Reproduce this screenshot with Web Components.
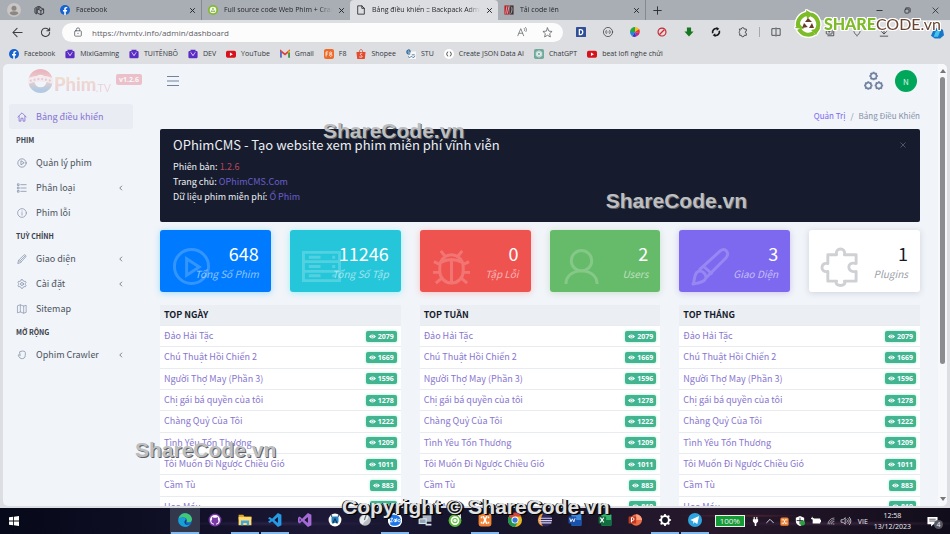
<!DOCTYPE html>
<html lang="vi">
<head>
<meta charset="utf-8">
<title>Bảng điều khiển :: Backpack Admin</title>
<style>
html,body{margin:0;height:100%}
body{overflow:hidden;font-family:"Open Sans","Noto Sans",sans-serif;font-size:8px;background:#dcdee2;
--page:"Noto Sans CJK SC","Noto Sans",sans-serif}
</style>
</head>
<body>
<desktop-screen></desktop-screen>
<script>
const S = (vb, body, extra = '') => `<svg viewBox="0 0 ${vb} ${vb}" ${extra}>${body}</svg>`;
const L = (body, w = 1.5, vb = 24) => S(vb, body, `fill="none" stroke="currentColor" stroke-width="${w}" stroke-linejoin="round" stroke-linecap="round"`);
const cogPath = n => { let d = ''; for (let i = 0; i < n * 4; i++) { const r = (i % 4 < 2) ? 10.5 : 8, a = (i - .5) * Math.PI / (n * 2) - Math.PI / 2 ; d += (i ? 'L' : 'M') + (12 + r * Math.cos(a)).toFixed(1) + ' ' + (12 + r * Math.sin(a)).toFixed(1); } return d + 'z'; };
const tv = S(24, '<path fill="#5b2cc4" d="M6 2h12v3h2a3 3 0 0 1 3 3v11a3 3 0 0 1-3 3H4a3 3 0 0 1-3-3V8a3 3 0 0 1 3-3h2z"/><path d="M8 10l4 6 4-6M6 8h2m8 0h2" stroke="#e8dcff" stroke-width="2.2" fill="none"/>');
const yt = S(24, '<rect y="4" width="24" height="17" rx="4" fill="#d6131c"/><path d="M9.5 8.5v8l7-4z" fill="#fff"/>');
const xampp = S(24, '<rect x="1" y="1" width="22" height="22" rx="4" fill="#f08132"/><path d="M8 6c3 0 2 4 4 6-2 2-1 6-4 6M16 6c-3 0-2 4-4 6 2 2 1 6 4 6M6 6v3m0 6v3M18 6v3m0 6v3" stroke="#fff" stroke-width="2.6" fill="none"/>');
const office = (c, c2, l) => S(24, `<rect x="6" y="2" width="17" height="20" rx="2" fill="${c}"/><path d="M6 12h17v8a2 2 0 0 1-2 2H6z" fill="${c2}"/><rect x="1" y="6" width="13" height="12" rx="1" fill="${c2}"/>${l}`);
const ICONS = {
 user: S(24, '<circle cx="12" cy="12" r="12" fill="#c9c6c3"/><circle cx="12" cy="9" r="4.3" fill="#8b8784"/><path d="M4.500 18c0-5 15-5 15 0-4 4-11 4-15 0" fill="#8b8784"/>'),
 spaces: L('<path d="M8 9l6-3 7 3v9l-6 3-7-3zM8 9l7 3v9M15 12l6-3M5 19l-3-2V7l7-4 6 2M5 19V8l7-4"/>', 1.7),
 fb: S(24, '<circle cx="12" cy="12" r="12" fill="#1763cf"/><path fill="#fff" d="M10.200 24v-8.700H7.200v-3.500h3V9.200c0-3 1.800-4.700 4.500-4.700l2.700.2v3h-1.500c-1.500 0-2 .9-2 1.900v2.200h3.300l-.5 3.500h-2.800V24z"/>'),
 leaf: S(24, '<circle cx="12" cy="12" r="12" fill="#82b92f"/><circle cx="12" cy="12" r="8" fill="#f4f8ea"/><path d="M12 6l2.500 5h-5zM6.500 16l3-4 2.500 4zm11 0l-3-4-2.500 4z" fill="#6d9d2a"/>'),
 file: L('<path d="M5 2h9l6 6v14H5zM14 2v6h6"/>', 2),
 code: S(24, '<path d="M1 1h11v22H1z" fill="#b71f28"/><path d="M13 1h10v22H13z" fill="#3d3235"/><path d="M7 3L4 21M12 3L8 21m9-17c4 1 2 14-1 17" stroke="#e6dcdc" stroke-width="1.600" fill="none"/>'),
 close: L('<path d="M5 5l14 14M19 5L5 19"/>', 3.4),
 xthin: L('<path d="M3 3l18 18M21 3L3 21"/>', 2.6),
 plus: L('<path d="M12 2v20M2 12h20"/>', 2.4),
 min: L('<path d="M3 12h18"/>', 3),
 max: L('<rect x="3" y="7" width="14" height="14" rx="3"/><path d="M7 3h11a3 3 0 0 1 3 3v11"/>', 2.6),
 back: L('<path d="M22 12H2M11 3l-9 9 9 9"/>', 2.3),
 reload: L('<path d="M21 12a9 9 0 1 1-3-7l3 3M21 2v6h-6"/>', 2.3),
 lock: L('<rect x="4" y="9" width="16" height="13" rx="2"/><path d="M8 9V6a4 4 0 0 1 8 0v3M12 15v1"/>', 2),
 read: L('<path d="M2 21L9 4l7 17M4.500 15h9M17 3c2 1.500 2 4 1 6M20.500 1c3 3 3 7 1 10"/>', 1.8),
 star: L('<path d="M12 2l3 7 7 .7-5.300 4.800 1.600 7.200L12 18l-6.300 3.700 1.600-7.200L2 9.700 9 9z"/>', 1.8),
 dsq: S(24, '<rect width="24" height="24" rx="2" fill="#2f4f98"/><path d="M8 6v12h3c7 0 7-12 0-12z" stroke="#fff" stroke-width="3" fill="none"/>'),
 dots: L('<circle cx="12" cy="12" r="11"/><path d="M8 8c-2 1-2 7 0 8m8-8c2 1 2 7 0 8M10 12h.1M14 12h.1"/>', 1.8),
 pin: S(24, '<path d="M12 12L12 0A12 12 0 0 1 22 5z" fill="#f4c21b"/><path d="M12 12L22 5a12 12 0 0 1 1 10z" fill="#e63b2e"/><path d="M12 12l11 3a12 12 0 0 1-8 8z" fill="#c12892"/><path d="M12 12l3 11a12 12 0 0 1-10-1z" fill="#4436b8"/><path d="M12 12L5 22A12 12 0 0 1 0 12z" fill="#2787d8"/><path d="M12 12H0A12 12 0 0 1 12 0z" fill="#25a648"/>'),
 ban: S(24, '<circle cx="12" cy="12" r="9.500"/><path d="M6 18L18 6"/>', 'fill="none" stroke="#cf2530" stroke-width="2.800"'),
 down: S(24, '<path d="M7 1h10v10h6L12 23 1 11h6z" fill="#167821"/>'),
 sync: S(24, '<path d="M4 15A9 9 0 0 1 15 4M20 9A9 9 0 0 1 9 20" fill="none" stroke="#17191b" stroke-width="4"/><path d="M13 0l7 4-6 5zM11 24l-7-4 6-5z" fill="#17191b"/>'),
 ext: L('<path d="M4 5h4a3.500 3.500 0 0 1 7 0h5v5a2.500 2.500 0 0 0 0 5v5h-5a3.500 3.500 0 0 1-7 0H4v-5a3 3 0 0 1 0-5z"/>', 2.1),
 split: L('<path d="M10 4H2v16h8M14 4h8v16h-8M12 2v20"/>', 2),
 favs: L('<path d="M3 7h18M3 12h12M3 17h9"/>', 1.8), coll: L('<rect x="3" y="3" width="14" height="14" rx="2"/><path d="M7 21h14V8M10 7v6M7 10h6"/>', 2),
 heart: L('<path d="M12 21C0 11 4 3 12 7c8-4 12 4 0 14"/>', 1.8),
 dl: L('<path d="M12 2v14M6 11l6 6 6-6M3 22h18"/>', 2),
 copilot: S(24, '<path d="M6 4h9l7 3 2 10-7 6H7l-7-5z" fill="#1677c9"/><path d="M9 9h8l-4 11H5z" fill="#43c3ee"/>'),
 tv, yt, xampp,
 gmail: S(24, '<path d="M2 20V5l10 8 10-8v15" fill="none" stroke="#e43e32" stroke-width="4"/><path d="M0 6h4v15H1z" fill="#3b7ded"/><path d="M20 6h4v15h-4z" fill="#2f9f4f"/><path d="M20 10V4h4v4z" fill="#f2b91b"/>'),
 f8: S(24, '<rect width="24" height="24" rx="5" fill="#ed6a28"/><path d="M5 18V7h5M5 12h4M16 7a2.500 2.500 0 1 0 .1 0M16 12a2.800 2.800 0 1 0 .1 0" fill="none" stroke="#fff" stroke-width="2"/>'),
 shopee: S(24, '<path d="M1 7h22l-2 17H3z" fill="#e44a2d"/><path d="M8 8c0-9 8-9 8 0" fill="none" stroke="#e44a2d" stroke-width="2"/><path d="M15 11c-3-2-7 1-3 4s4 6-4 4" fill="none" stroke="#fff" stroke-width="2"/>'),
 stu: S(24, '<path d="M7 6h17v18H7z" fill="#f5f7f9"/><path d="M2 7h8c0-8-9-5-8 1s7 4 8 3" fill="none" stroke="#245f98" stroke-width="2.500"/><path d="M5 18l4 3 4-4 4 4 5-4M14 14h7" fill="none" stroke="#3d6b92" stroke-width="2"/>'),
 json: S(24, '<circle cx="12" cy="12" r="12" fill="#fff"/><path d="M10 7C6 7 9 11 6 12c3 1 0 5 4 5m4-10c4 0 1 4 4 5-3 1 0 5-4 5" fill="none" stroke="#222" stroke-width="2"/>'),
 gpt: S(24, '<rect width="24" height="24" rx="4" fill="#71a99b"/><g fill="none" stroke="#fff" stroke-width="1.500"><ellipse cx="12" cy="12" rx="3.500" ry="8"/><ellipse cx="12" cy="12" rx="3.500" ry="8" transform="rotate(60 12 12)"/><ellipse cx="12" cy="12" rx="3.500" ry="8" transform="rotate(120 12 12)"/></g>'),
 home: L('<path d="M2 12L12 2l10 10M5 10v12h4.500v-7h5v7H19V10"/>', 2),
 play: L('<circle cx="12" cy="12" r="10"/><path d="M9.500 7.500v9l7-4.500z"/>', 2),
 list: L('<path d="M9 4h13M9 12h13M9 20h13M2 2h3v4H2zM2 10h3v4H2zM2 18h3v4H2z"/>', 1.9),
 info: L('<circle cx="12" cy="12" r="10.500"/><path d="M12 11v6M12 7v.5"/>', 1.8),
 pencil: L('<path d="M2 22l2-7L17 2c2-1 6 2 4 5L9 20zM4 15l5 5M8 16L19 5"/>', 1.8),
 cog: L(`<path d="${cogPath(6)}"/><circle cx="12" cy="12" r="3.500"/>`, 1.9),
 map: L('<path d="M2 4l6-2 8 3 6-2v17l-6 2-8-3-6 2zM8 2v17M16 5v17"/>', 1.7),
 hand: L('<path d="M7 4c3-2 10-2 12 0s1 9 0 13-9 5-12 2-5-7-3-8c2 1 3 2 3 2z"/>', 1.9),
 left: L('<path d="M15 4l-8 8 8 8"/>', 3.6),
 cogs: S(36, [[10.5, 0], [0.5, 18], [20.5, 18]].map(p => `<g transform="translate(${p[0]} ${p[1]}) scale(.64)"><path d="${cogPath(8)}"/></g>`).join(''), 'fill="none" stroke="currentColor" stroke-width="4.400"'),
 menu: S(24, '<path d="M0 3h24M0 12h24M0 21h24" stroke="currentColor" stroke-width="2.200"/>'),
 eye: S(24, '<path d="M0 12Q12-1 24 12 12 25 0 12" fill="currentColor"/><circle cx="12" cy="12" r="4" fill="none" stroke="#42b48f" stroke-width="2"/>'),
 bplay: L('<circle cx="20" cy="20" r="17.500"/><path d="M15 12v17l13-8.500z" stroke-linejoin="miter"/>', 3, 40),
 bserver: S(40, '<path d="M1.500 5.500h37v29h-37zM1.500 15h37M1.500 25h37"/><path d="M7 10.500h12M7 20h12M7 29.500h12M31 10.500h3M31 20h3M31 29.500h3"/>', 'fill="none" stroke="currentColor" stroke-width="3"'),
 bbug: S(40, '<path d="M8 20a12 12 0 0 1 24 0v5a12 12 0 0 1-24 0zM9 16c7-4 15-4 22 0M20 14v22M13 9l-4-5M27 9l4-5M8 18l-6-3M32 18l6-3M8 26H1M32 26h7M10 32l-6 5M30 32l6 5"/>', 'fill="none" stroke="currentColor" stroke-width="3"'),
 buser: S(40, '<circle cx="20" cy="14" r="10.500"/><path d="M4 38c0-18 32-18 32 0"/>', 'fill="none" stroke="currentColor" stroke-width="3"'),
 bbrush: L('<path d="M2 38c2-3 1-9 4-12 5-4 12 3 8 8-3 3-9 3-12 4M9 23L30 4c5-4 10 2 6 7L16 31M13 20l8 7"/>', 3, 40),
 bpuzzle: L('<path d="M7 8h9c-2-8 10-8 8 0h12v9c-10-3-10 10 0 8v10H24c3 6-11 6-8 0H7V25c-8 2-8-10 0-8z"/>', 3, 40),
 win: S(24, '<path d="M0 3l10-1v9H0zM12 2l12-2v11H12zM0 13h10v9L0 21zM12 13h12v11l-12-2z" fill="#fff"/>'),
 edge: S(24, '<circle cx="12" cy="12" r="12" fill="#1767c4"/><path d="M1 10C4-4 23-2 24 11c-1 7-11 6-9 1 1-5-8-6-14-2" fill="#42c977"/><path d="M1 10c6-5 13-2 12 2-5 5 1 11 9 7C12 30-2 20 1 10" fill="#189fd5"/><path d="M13 12c-5 5 1 11 9 7-9 3-10-3-7-7z" fill="#0d3f83"/>'),
 git: S(24, '<circle cx="12" cy="12" r="11" fill="#7839a6"/><circle cx="12" cy="12" r="8.500" fill="#fff"/><path d="M7 7l3 1h4l3-1v4c3 5-2 7-3 7v3h-4v-3c-3 0-6-4-3-7z" fill="#7839a6"/>'),
 folder: S(24, '<path d="M1 3h8l2 3h12v5H1z" fill="#dca62d"/><path d="M1 7h22v14H1z" fill="#ffdc72"/><path d="M5 21v-8h14v8h-4v-4H9v4z" fill="#41a7df"/>'),
 vsc: S(24, '<path d="M17 0l6 3v18l-6 3L7 14l-4 3-3-2 4-3-4-3 3-2 4 3zM17 7l-6 5 6 5z" fill="#269ae5" fill-rule="evenodd"/>'),
 vs: S(24, '<path d="M17 0l6 3v18l-6 3L7 14l-4 4-3-2V8l3-2 4 4zM17 7l-6 5 6 5zM3 9v6l2-3z" fill="#a56ad5" fill-rule="evenodd"/>'),
 studio: S(24, '<circle cx="12" cy="12" r="11" fill="#fff"/><rect x="6" y="6" width="12" height="11" rx="2" fill="#2483c7"/><path d="M8 18l4-8 4 8M7 6l-2-2m12 2l2-2" fill="none" stroke="#13374d" stroke-width="2"/>'),
 mouse: S(24, '<circle cx="12" cy="12" r="10" fill="#b9bec2"/><path d="M4 17C0 3 18 0 18 7c-1 7-10 8-9 13" fill="#e9ecee"/><path d="M14 3l-3 9" stroke="#697078" stroke-width="2"/>'),
 zalo: S(24, '<rect width="24" height="24" rx="10" fill="#fff"/><rect x="1" y="1" width="22" height="22" rx="9" fill="#fff"/><path d="M3 5c5-4 18-3 19 7s-12 12-18 8z" fill="#1975e8"/><path d="M4 9h4l-4 6h4m5-4c-4-2-4 5 0 4v-4 4m2-6v6m4-4a2 2 0 1 0 .1 0" stroke="#fff" stroke-width="1.600" fill="none"/>'),
 pc: S(24, '<path d="M8 4h15v11H8z" fill="#aab5c1"/><path d="M1 9h14v10H1z" fill="#dbe2e9"/><path d="M3 11h10v6H3z" fill="#90a4b6"/><path d="M13 20h10" stroke="#dbe2e9" stroke-width="3"/>'),
 coc: S(24, '<circle cx="12" cy="13" r="11" fill="#59b938"/><circle cx="12" cy="13" r="6" fill="none" stroke="#fff" stroke-width="3"/><circle cx="12" cy="13" r="3" fill="#e9f4e3"/><path d="M16 1l6 8M21 0v7" stroke="#fff" stroke-width="2"/>'),
 chrome: S(24, '<circle cx="12" cy="12" r="12" fill="#e7b921"/><path d="M12 12L1.500 6A12 12 0 0 1 23 6H12z" fill="#db4437"/><path d="M12 12L1.500 6A12 12 0 0 0 12 24l6-10z" fill="#219653"/><circle cx="12" cy="12" r="6" fill="#fff"/><circle cx="12" cy="12" r="4.500" fill="#3878dc"/>'),
 eclipse: S(24, '<circle cx="13" cy="12" r="11" fill="#2d275d"/><path d="M1 7a11 11 0 0 0 8 16C4 18 4 7 9 1 5 1 2 4 1 7" fill="#f49a35"/><path d="M2 9h22M2 13h22M3 17h20" stroke="#d5d0ec" stroke-width="2"/>'),
 word: office('#3c8adb', '#1951ad', '<path d="M3 9l2 6 2.500-5L10 15l2-6" fill="none" stroke="#fff" stroke-width="1.500"/>'),
 excel: office('#31b56e', '#126d3f', '<path d="M4 8l6 8M10 8l-6 8" stroke="#fff" stroke-width="1.800"/>'),
 ppt: S(24, '<circle cx="14" cy="12" r="10" fill="#f06c43"/><path d="M14 2a10 10 0 0 1 10 10H14z" fill="#ffa080"/><rect x="1" y="6" width="13" height="12" rx="1" fill="#bd3a20"/><path d="M6 16V8h2c3 0 3 5 0 5H6" fill="none" stroke="#fff" stroke-width="1.700"/>'),
 gear: S(24, `<path d="${cogPath(8)}" fill="#fff"/><circle cx="12" cy="12" r="5" fill="#171426"/>`),
 tele: S(24, '<circle cx="12" cy="12" r="12" fill="#2da4df"/><path d="M4 12l15-7-3 14-5-3-2 3v-5z" fill="#fff"/>'),
 plug: S(24, '<path d="M7 0h3v6h4V0h3v6h2v6l-5 5v7h-4v-7l-5-5V6h2z" fill="#fff"/>'),
 up: L('<path d="M2 17L12 7l10 10"/>', 2.6),
 shield: S(24, '<path d="M12 0l10 4v8c0 7-5 10-10 12C7 22 2 19 2 12V4z" fill="#fff"/><path d="M12 4v16M4 11h16" stroke="#171426" stroke-width="2"/><circle cx="18" cy="17" r="6" fill="#29a23c"/>'),
 batt: S(24, '<path d="M4 6h18v12H4zM22 9h2v6h-2z" fill="#fff"/><path d="M3 2v7M0 6h7" stroke="#fff" stroke-width="2"/>'),
 wifi: L('<path d="M3 21A18 18 0 0 1 21 3M8 21A13 13 0 0 1 21 8M13 21a8 8 0 0 1 8-8M18 21h3"/>', 1.7),
 sound: L('<path d="M1 9h4l5-5v16l-5-5H1zM14 9c2 2 2 4 0 6M17 6c4 4 4 8 0 12M20 3c5 6 5 12 0 18"/>', 1.7),
 note: S(24, '<path d="M1 2h22v16h-9l-5 5v-5H1z" fill="#fff"/><path d="M5 7h14M5 11h14" stroke="#1b1a25" stroke-width="1.500"/>')
};

const define = (tag, css, html) => customElements.define(tag, class extends HTMLElement {
  connectedCallback() {
    if (this.shadowRoot) return;
    const root = this.attachShadow({ mode: 'open' });
    const t = document.createElement('template');
    t.innerHTML = `<style>*{box-sizing:border-box}button{font:inherit;color:inherit;border:0;padding:0;background:none;display:flex;align-items:center;justify-content:center}a{color:inherit;text-decoration:none}${css}</style>${typeof html === 'function' ? html(this) : html}`;
    root.append(t.content.cloneNode(true));
  }
});
const ic = (n, s = 10) => `<ui-icon name="${n}" style="--s:${s}px"></ui-icon>`;

define('ui-icon', `:host{display:block;flex:none;width:var(--s,10px);height:var(--s,10px)}svg{display:block;width:100%;height:100%;overflow:visible}`, e => ICONS[e.getAttribute('name')]);

/* Browser chrome */
define('browser-tab', `:host{display:flex;flex:0 1 148px;min-width:0;height:20px;align-items:center;gap:6px;padding:0 5px 0 6px;color:#25282c;position:relative}
:host([active]){background:#dcdee2;border-radius:4px 4px 0 0}
:host([line]){border-right:1px solid #85898f}
.t{flex:1;justify-content:flex-start;min-width:0;overflow:hidden;white-space:nowrap;font-size:7px;line-height:12px;-webkit-mask:linear-gradient(90deg,#000 88%,transparent)}`,
 e => `${ic(e.getAttribute('icon'))}<button class="t" role="tab"><slot></slot></button><button aria-label="Đóng tab">${ic('close', 7)}</button>`);
define('tab-strip', `:host{display:flex;height:20px;background:#a9adb4;align-items:center;color:#25282c}
.lead{display:flex;width:54px;gap:13px;padding-left:7px;align-items:center}.plus{margin-left:7px}.win{margin-left:auto;display:flex;gap:21px;padding-right:11px}`,
 `<div class="lead">${ic('user', 14)}${ic('spaces', 11)}</div>
<browser-tab icon="fb" line>Facebook</browser-tab><browser-tab icon="leaf">Full source code Web Phim + Crawl</browser-tab><browser-tab icon="file" active>Bảng điều khiển :: Backpack Admin</browser-tab><browser-tab icon="code" line>Tải code lên</browser-tab>
<button class="plus" aria-label="Tab mới">${ic('plus', 9)}</button><div class="win"><button aria-label="Thu nhỏ">${ic('min', 7)}</button><button aria-label="Phóng to">${ic('max', 7)}</button><button aria-label="Đóng">${ic('xthin', 7)}</button></div>`);
define('address-bar', `:host{display:flex;height:24px;align-items:center;padding-right:6px;color:#3a3d41}
.nav{display:flex;width:62px;gap:17px;padding-left:12px}
.box{flex:1;height:19px;border-radius:10px;background:#fcfcfd;display:flex;align-items:center;gap:9px;padding:0 10px 0 11px;color:#62666b}
input{flex:1;min-width:0;border:0;background:none;outline:0;font:8px "Open Sans","Noto Sans",sans-serif;color:#5c6065;padding:0}
.ext{display:flex;gap:17px;padding-left:13px;align-items:center}.ext i{width:1px;height:10px;background:#a6a8ac;margin:0 -6px}.box button+button{margin-left:6px}`,
 `<div class="nav"><button aria-label="Quay lại">${ic('back', 11)}</button><button aria-label="Tải lại">${ic('reload', 11)}</button></div>
<div class="box">${ic('lock', 10)}<input aria-label="Địa chỉ" value="https://hvmtv.info/admin/dashboard"><button aria-label="Đọc to">${ic('read', 10)}</button><button aria-label="Yêu thích">${ic('star', 11)}</button></div>
<div class="ext">${['dsq', 'dots', 'pin', 'ban', 'down', 'sync', 'ext'].map(n => `<button aria-label="${n}">${ic(n)}</button>`).join('')}<i></i>${['split', 'favs', 'coll', 'heart', 'dl'].map(n => `<button aria-label="${n}">${ic(n)}</button>`).join('')}<span style="width:8px"></span><button aria-label="Copilot">${ic('copilot', 13)}</button></div>`);
define('bookmark-bar', `:host{display:flex;height:20px;align-items:center;padding:0 9px 1px;gap:10px;font-size:7px;line-height:12px;color:#34373b;white-space:nowrap}a{display:flex;gap:5px;align-items:center}`,
 [['fb', 'Facebook'], ['tv', 'MixiGaming'], ['tv', 'TUITÊNBÔ'], ['tv', 'DEV'], ['yt', 'YouTube'], ['gmail', 'Gmail'], ['f8', 'F8'], ['shopee', 'Shopee'], ['stu', 'STU'], ['json', 'Create JSON Data AI'], ['gpt', 'ChatGPT'], ['yt', 'beat lofi nghe chửi']].map(b => `<a href="#">${ic(b[0])}${b[1]}</a>`).join(''));

/* Admin page */
define('side-item', `:host{display:block}a{display:flex;align-items:center;height:25px;padding:0 9px 0 8px;gap:9px;color:#4b535d;font-size:9px;line-height:16px;border-radius:3px}ui-icon{color:#8593ab}
.c{margin-left:auto;color:#6d7683}:host([active]) a{background:#e9ecf2;color:#8571d6}:host([active]) ui-icon{color:#8571d6}`,
 e => `<a href="#">${ic(e.getAttribute('icon'))}<slot></slot>${e.hasAttribute('more') ? `<ui-icon class="c" name="left" style="--s:6px"></ui-icon>` : ''}</a>`);
define('site-logo', `:host{display:flex;align-items:center;gap:1px;opacity:.3}svg{width:91px;height:30px;display:block}
.v{background:#df4759;color:#fff;font:bold 7px/11px "Open Sans",sans-serif;border-radius:2px;padding:0 3px;margin-bottom:4px}`,
 `<svg viewBox="0 0 91 30"><defs><linearGradient id="a" x2="0" y2="1"><stop stop-color="#d92b3b"/><stop offset=".45" stop-color="#e97a60"/><stop offset="1" stop-color="#2068ac"/></linearGradient><linearGradient id="b" x2="0" y2="1"><stop stop-color="#edb75c"/><stop offset="1" stop-color="#df6f91"/></linearGradient></defs>
<circle cx="14" cy="15" r="9.500" fill="none" stroke="url(#a)" stroke-width="6"/><path d="M1 12q13-5 26 0v6q-13-5-26 0z" fill="#f7d8d8"/><path d="M3 15q10-4 22 0" stroke="#cc6673" stroke-width="2" stroke-dasharray="2 2" fill="none"/><text x="28" y="25" font-size="19" font-weight="900" fill="url(#b)" font-family="Lato,sans-serif">Phim</text><text x="71" y="26" font-size="11" fill="#e68798" font-family="Lato,sans-serif">.TV</text></svg><span class="v">v1.2.6</span>`);
define('side-menu', `:host{display:block;width:139px;flex:none;padding:2px 0 0 6px}nav{width:124px;margin-top:8px}
h2{margin:0;font-size:7px;line-height:22px;height:21px;padding-left:7px;color:#3a414b;font-weight:700}site-logo{margin-left:18px}`,
 `<site-logo></site-logo><nav><side-item icon="home" active>Bảng điều khiển</side-item><h2>PHIM</h2><side-item icon="play">Quản lý phim</side-item><side-item icon="list" more>Phân loại</side-item><side-item icon="info">Phim lỗi</side-item><h2>TUỲ CHỈNH</h2><side-item icon="pencil" more>Giao diện</side-item><side-item icon="cog" more>Cài đặt</side-item><side-item icon="map">Sitemap</side-item><h2>MỞ RỘNG</h2><side-item icon="hand" more>Ophim Crawler</side-item></nav>`);
define('page-head', `:host{display:block;color:#71829f}.bar{display:flex;height:34px;align-items:center;justify-content:space-between;padding:0 3px 0 7px}.r{display:flex;gap:12px;align-items:center}
.av{width:22px;height:22px;border-radius:50%;background:#00a65a;color:#d5f3e4;font-size:8px}nav{display:flex;justify-content:flex-end;gap:5px;height:31px;padding-top:10px;font-size:8px;line-height:16px;color:#8592a8}a{color:#7c69ef}`,
 `<div class="bar"><button aria-label="Menu">${ic('menu', 12)}</button><div class="r"><button aria-label="Cài đặt">${ic('cogs', 19)}</button><button class="av">N</button></div></div><nav aria-label="Breadcrumb"><a href="#">Quản Trị</a><span>/</span><span>Bảng Điều Khiển</span></nav>`);
define('intro-banner', `:host{display:block;position:relative;background:#161c2d;color:#eceef3;border-radius:2px;padding:7px 13px 0;height:93px}h1{margin:0 0 5px;font-size:13px;line-height:18px;font-weight:400}p{margin:0;font-size:9px;line-height:15px}a{color:#6a5ccb}b{font-weight:400;color:#b4455c}
button{position:absolute;right:14px;top:13px;color:#6d7483}`,
 `<h1>OPhimCMS - Tạo website xem phim miễn phí vĩnh viễn</h1><p>Phiên bản: <b>1.2.6</b></p><p>Trang chủ: <a href="#">OPhimCMS.Com</a></p><p>Dữ liệu phim miễn phí: <a href="#">Ổ Phim</a></p><button aria-label="Đóng">${ic('xthin', 6)}</button>`);
define('stat-card', `:host{display:flex;min-width:0;height:62px;border-radius:3px;position:relative;background:var(--bg);color:var(--fg,#fff);box-shadow:0 1px 6px var(--glow,#c6ccd6);padding:12px 12px 0;flex-direction:column;align-items:flex-end}
strong{font-size:18px;line-height:22px;font-weight:400}em{font-size:10px;line-height:16px;margin-top:2px;color:var(--sub,#ffffff90);white-space:nowrap}
ui-icon{position:absolute;left:12px;top:17px;opacity:.2}`,
 e => `${ic(e.getAttribute('icon'), 39)}<strong>${e.getAttribute('value')}</strong><em><slot></slot></em>`);
define('stat-row', `:host{display:grid;grid-template-columns:repeat(6,1fr);gap:19px;margin-top:8px}`,
 [['#007bff', 'bplay', 648, 'Tổng Số Phim', '#9bdcff'], ['#26c6da', 'bserver', 11246, 'Tổng Số Tập', '#9df0f8'], ['#ef5350', 'bbug', 0, 'Tập Lỗi', '#f8c3c5'], ['#66bb6a', 'buser', 2, 'Users', '#c6dfcd'], ['#7c69ef', 'bbrush', 3, 'Giao Diện', '#cac5ef'], ['#fff;--fg:#161c2d;--sub:#9a9fa8', 'bpuzzle', 1, 'Plugins', '#ccd1db']].map(c => `<stat-card icon="${c[1]}" value="${c[2]}" style="--bg:${c[0]};--glow:${c[4]}">${c[3]}</stat-card>`).join(''));
const films = [['Đảo Hải Tặc', 2079], ['Chú Thuật Hồi Chiến 2', 1669], ['Người Thợ May (Phần 3)', 1596], ['Chị gái bá quyền của tôi', 1278], ['Chàng Quỷ Của Tôi', 1222], ['Tình Yêu Tổn Thương', 1209], ['Tôi Muốn Đi Ngược Chiều Gió', 1011], ['Cầm Tù', 883], ['Hoa Máu', 819]];
define('view-badge', `:host{display:flex;width:max-content;margin-left:auto;align-items:center;gap:2px;height:11px;padding:0 3px;border-radius:2px;background:#42b48f;color:#fff;font:bold 7px/11px "Open Sans",sans-serif;box-shadow:0 0 3px #9be8cf}`, `${ic('eye', 7)}<slot></slot>`);
define('top-list', `:host{display:block;min-width:0}table{width:100%;height:212px;border-spacing:0;background:#fff}th{height:20px;background:#ebeef3;color:#161c2d;text-align:left;font-size:9px;line-height:16px;font-weight:700}td{height:21px;border-top:1px solid #e8ebf0;font-size:9px;line-height:16px}th,td{padding:0 4px}a{display:block;color:#8776cf}`,
 e => `<table><thead><tr><th colspan="2">${e.getAttribute('label')}</th></tr></thead><tbody>${films.map(f => `<tr><td><a href="#">${f[0]}</a></td><td><view-badge>${f[1]}</view-badge></td></tr>`).join('')}</tbody></table>`);
define('page-scrollbar', `:host{width:9px;flex:none;display:flex;flex-direction:column;align-items:center;background:#f7f8fa;padding:5px 0;gap:4px}i{border:3px solid transparent;border-top:0;border-bottom:4px solid #777}i.d{border-top:4px solid #777;border-bottom:0}div{flex:1}b{display:block;width:5px;height:69%;border-radius:3px;background:#8b8c8f}`, `<i></i><div><b></b></div><i class="d"></i>`);
define('admin-page', `:host{display:flex;flex:1;min-height:0;overflow:hidden;margin:0 3px 2px;border-radius:5px;background:#f1f4f9;font-family:var(--page)}main{flex:1;min-width:0;padding:0 18px 0 18px}.lists{display:grid;grid-template-columns:repeat(3,1fr);gap:19px;margin-top:13px}`,
 `<side-menu></side-menu><main><page-head></page-head><intro-banner></intro-banner><stat-row></stat-row><div class="lists"><top-list label="TOP NGÀY"></top-list><top-list label="TOP TUẦN"></top-list><top-list label="TOP THÁNG"></top-list></div></main><page-scrollbar></page-scrollbar>`);

/* Windows taskbar */
const apps = ['edge', 'git', 'folder', 'vsc', 'vs', 'studio', 'mouse', 'zalo', 'pc', 'coc', 'xampp', 'chrome', 'eclipse', 'word', 'excel', 'ppt', 'gear', 'tele'];
const open = ['edge', 'folder', 'vsc', 'zalo', 'xampp', 'gear', 'tele'];
define('task-bar', `:host{display:flex;height:26px;flex:none;align-items:center;color:#f0f0f4;background:radial-gradient(ellipse at 78% 30%,#5a2430 0,transparent 6%),radial-gradient(ellipse at 30% 60%,#2a2348 0,transparent 12%),radial-gradient(ellipse at 88% 60%,#38233e,transparent 12%),linear-gradient(90deg,#060919,#111027 20%,#1c1836 34%,#15142b 50%,#27182b 75%,#110d1b)}
.start{width:30px;height:26px}.apps{display:flex;margin-left:142px}.apps button{width:30px;height:26px;border-bottom:2px solid transparent;background-clip:padding-box}.apps .o{border-image:linear-gradient(90deg,transparent 10%,#83b9ed 10%,#83b9ed 90%,transparent 90%) 2}.apps .a{background:#34384c}
.tray{display:flex;align-items:center;margin-left:5px;gap:6px;flex:1;white-space:nowrap}.p{width:30px;height:12px;border:1px solid #e9f5e9;background:#159b36;font-size:8px;line-height:10px;text-align:center}.t{font-size:7px;line-height:11px;text-align:center;margin-left:auto;margin-right:10px}.vie{font-size:7px;margin-left:1px}.n{margin-right:12px;position:relative}.n span{position:absolute;right:-5px;top:4px;width:9px;height:9px;line-height:9px;border-radius:50%;background:#555763;font-size:7px}`,
 `<button class="start" aria-label="Start">${ic('win', 10)}</button><div class="apps">${apps.map(a => `<button aria-label="${a}" class="${open.includes(a) ? 'o' : ''} ${a === 'edge' ? 'a' : ''}">${ic(a, 14)}</button>`).join('')}</div>
<div class="tray"><span class="p">100%</span>${ic('plug', 9)}${ic('up', 8)}${ic('xampp', 9)}${ic('shield', 10)}${ic('batt', 10)}${ic('wifi', 8)}${ic('sound', 10)}<span class="vie">VIE</span><time class="t">12:58<br>13/12/2023</time><button class="n" aria-label="Thông báo">${ic('note', 11)}<span>4</span></button></div>`);

/* Overlaid marks */
define('water-mark', `:host{position:absolute;font:bold 21px/24px "Liberation Sans",Arial,sans-serif;color:#bdbec0;white-space:nowrap;text-shadow:1px 1px 0 #606165;pointer-events:none}
:host([solid]){color:#e2e2e4;text-shadow:1px 1px 0 #000,2px 1px 0 #111,-1px 0 0 #222}`, `<slot></slot>`);
define('brand-mark', `:host{position:absolute;right:9px;top:9px;display:flex;align-items:center;gap:3px;filter:drop-shadow(1px 0 0 #fff) drop-shadow(-1px 0 0 #fff) drop-shadow(0 1px 0 #fff) drop-shadow(0 -1px 0 #fff);font:16px/24px Lato,sans-serif;color:#6a4431}svg{width:26px;height:29px;display:block}b{color:#7dbb28;font-weight:900}`,
 `<svg viewBox="0 0 26 29"><circle cx="13" cy="15" r="11.500" fill="#fff"/><g fill="none" stroke="#7dbb28" stroke-width="4"><path d="M3 17A10.500 10.500 0 0 1 13 5"/><path d="M16 5.500A10.500 10.500 0 0 1 21 22"/><path d="M19 24A10.500 10.500 0 0 1 4 20"/></g><path d="M11 1l7 4-6 5zM25 19l-4 7-5-5zM0 19l4-5 5 6z" fill="#7dbb28"/><path d="M13 9l4 4h-7zM7 19l2-5 4 4zm12 0l-2-5-3 5z" fill="#6a3c28"/><circle cx="13" cy="16" r="1.500" fill="#fff"/></svg><span><b>SHARE</b>CODE.vn</span>`);
define('desktop-screen', `:host{display:flex;flex-direction:column;height:100vh;position:relative;overflow:hidden}tab-strip,address-bar,bookmark-bar{flex:none}
.a{left:34%;top:119px}.b{right:203px;top:189px}.c{left:135px;top:438px}.d{left:36%;bottom:15px}`,
 `<tab-strip></tab-strip><address-bar></address-bar><bookmark-bar></bookmark-bar><admin-page></admin-page><task-bar></task-bar><brand-mark></brand-mark><water-mark class="a">ShareCode.vn</water-mark><water-mark class="b">ShareCode.vn</water-mark><water-mark class="c">ShareCode.vn</water-mark><water-mark class="d" solid>Copyright © ShareCode.vn</water-mark>`);
</script>
</body>
</html>
